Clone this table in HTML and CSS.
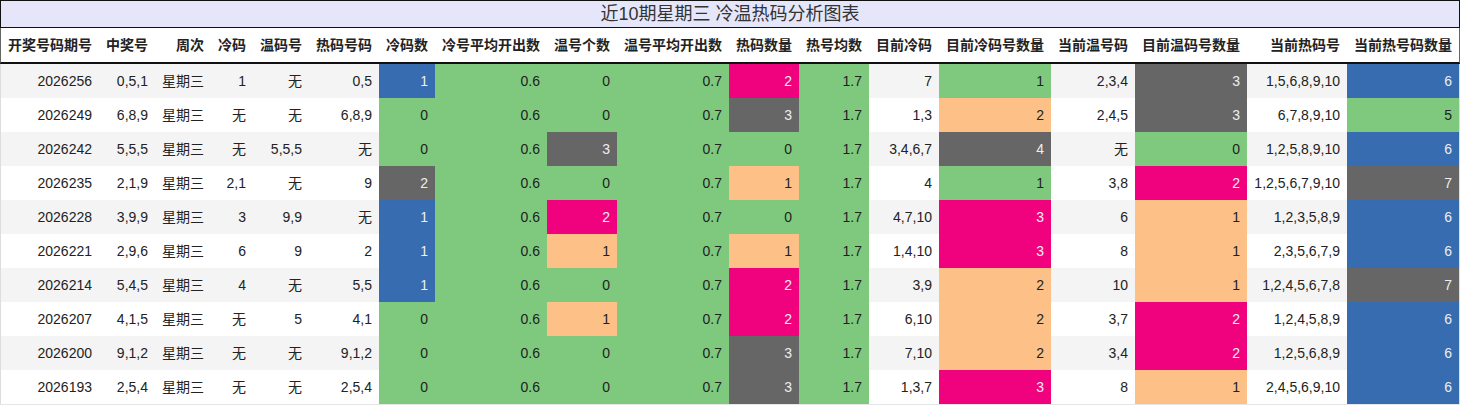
FILE: index.html
```html
<!DOCTYPE html>
<html lang="zh-CN">
<head>
<meta charset="utf-8">
<title>近10期星期三 冷温热码分析图表</title>
<link rel="stylesheet" href="styles.css">
</head>
<body>
<div class="chart">
  <div class="title">近10期星期三 冷温热码分析图表</div>
  <div class="table">
    <div class="row head">
      <div class="c">开奖号码期号</div><div class="c">中奖号</div><div class="c">周次</div><div class="c">冷码</div><div class="c">温码号</div><div class="c">热码号码</div><div class="c">冷码数</div><div class="c">冷号平均开出数</div><div class="c">温号个数</div><div class="c">温号平均开出数</div><div class="c">热码数量</div><div class="c">热号均数</div><div class="c">目前冷码</div><div class="c">目前冷码号数量</div><div class="c">当前温号码</div><div class="c">目前温码号数量</div><div class="c">当前热码号</div><div class="c">当前热号码数量</div>
    </div>
    <div class="row">
      <div class="c">2026256</div><div class="c">0,5,1</div><div class="c">星期三</div><div class="c">1</div><div class="c">无</div><div class="c">0,5</div><div class="c blue">1</div><div class="c green">0.6</div><div class="c green">0</div><div class="c green">0.7</div><div class="c pink">2</div><div class="c green">1.7</div><div class="c">7</div><div class="c green">1</div><div class="c">2,3,4</div><div class="c grey">3</div><div class="c">1,5,6,8,9,10</div><div class="c blue">6</div>
    </div>
    <div class="row">
      <div class="c">2026249</div><div class="c">6,8,9</div><div class="c">星期三</div><div class="c">无</div><div class="c">无</div><div class="c">6,8,9</div><div class="c green">0</div><div class="c green">0.6</div><div class="c green">0</div><div class="c green">0.7</div><div class="c grey">3</div><div class="c green">1.7</div><div class="c">1,3</div><div class="c orange">2</div><div class="c">2,4,5</div><div class="c grey">3</div><div class="c">6,7,8,9,10</div><div class="c green">5</div>
    </div>
    <div class="row">
      <div class="c">2026242</div><div class="c">5,5,5</div><div class="c">星期三</div><div class="c">无</div><div class="c">5,5,5</div><div class="c">无</div><div class="c green">0</div><div class="c green">0.6</div><div class="c grey">3</div><div class="c green">0.7</div><div class="c green">0</div><div class="c green">1.7</div><div class="c">3,4,6,7</div><div class="c grey">4</div><div class="c">无</div><div class="c green">0</div><div class="c">1,2,5,8,9,10</div><div class="c blue">6</div>
    </div>
    <div class="row">
      <div class="c">2026235</div><div class="c">2,1,9</div><div class="c">星期三</div><div class="c">2,1</div><div class="c">无</div><div class="c">9</div><div class="c grey">2</div><div class="c green">0.6</div><div class="c green">0</div><div class="c green">0.7</div><div class="c orange">1</div><div class="c green">1.7</div><div class="c">4</div><div class="c green">1</div><div class="c">3,8</div><div class="c pink">2</div><div class="c">1,2,5,6,7,9,10</div><div class="c grey">7</div>
    </div>
    <div class="row">
      <div class="c">2026228</div><div class="c">3,9,9</div><div class="c">星期三</div><div class="c">3</div><div class="c">9,9</div><div class="c">无</div><div class="c blue">1</div><div class="c green">0.6</div><div class="c pink">2</div><div class="c green">0.7</div><div class="c green">0</div><div class="c green">1.7</div><div class="c">4,7,10</div><div class="c pink">3</div><div class="c">6</div><div class="c orange">1</div><div class="c">1,2,3,5,8,9</div><div class="c blue">6</div>
    </div>
    <div class="row">
      <div class="c">2026221</div><div class="c">2,9,6</div><div class="c">星期三</div><div class="c">6</div><div class="c">9</div><div class="c">2</div><div class="c blue">1</div><div class="c green">0.6</div><div class="c orange">1</div><div class="c green">0.7</div><div class="c orange">1</div><div class="c green">1.7</div><div class="c">1,4,10</div><div class="c pink">3</div><div class="c">8</div><div class="c orange">1</div><div class="c">2,3,5,6,7,9</div><div class="c blue">6</div>
    </div>
    <div class="row">
      <div class="c">2026214</div><div class="c">5,4,5</div><div class="c">星期三</div><div class="c">4</div><div class="c">无</div><div class="c">5,5</div><div class="c blue">1</div><div class="c green">0.6</div><div class="c green">0</div><div class="c green">0.7</div><div class="c pink">2</div><div class="c green">1.7</div><div class="c">3,9</div><div class="c orange">2</div><div class="c">10</div><div class="c orange">1</div><div class="c">1,2,4,5,6,7,8</div><div class="c grey">7</div>
    </div>
    <div class="row">
      <div class="c">2026207</div><div class="c">4,1,5</div><div class="c">星期三</div><div class="c">无</div><div class="c">5</div><div class="c">4,1</div><div class="c green">0</div><div class="c green">0.6</div><div class="c orange">1</div><div class="c green">0.7</div><div class="c pink">2</div><div class="c green">1.7</div><div class="c">6,10</div><div class="c orange">2</div><div class="c">3,7</div><div class="c pink">2</div><div class="c">1,2,4,5,8,9</div><div class="c blue">6</div>
    </div>
    <div class="row">
      <div class="c">2026200</div><div class="c">9,1,2</div><div class="c">星期三</div><div class="c">无</div><div class="c">无</div><div class="c">9,1,2</div><div class="c green">0</div><div class="c green">0.6</div><div class="c green">0</div><div class="c green">0.7</div><div class="c grey">3</div><div class="c green">1.7</div><div class="c">7,10</div><div class="c orange">2</div><div class="c">3,4</div><div class="c pink">2</div><div class="c">1,2,5,6,8,9</div><div class="c blue">6</div>
    </div>
    <div class="row">
      <div class="c">2026193</div><div class="c">2,5,4</div><div class="c">星期三</div><div class="c">无</div><div class="c">无</div><div class="c">2,5,4</div><div class="c green">0</div><div class="c green">0.6</div><div class="c green">0</div><div class="c green">0.7</div><div class="c grey">3</div><div class="c green">1.7</div><div class="c">1,3,7</div><div class="c pink">3</div><div class="c">8</div><div class="c orange">1</div><div class="c">2,4,5,6,9,10</div><div class="c blue">6</div>
    </div>
  </div>
</div>
</body>
</html>
```

FILE: styles.css
```css
* { box-sizing: border-box; }

html, body {
  margin: 0;
  padding: 0;
  background: #ffffff;
}

body {
  font-family: "Liberation Sans", "Noto Sans CJK SC", sans-serif;
  font-size: 14px;
  color: #222222;
}

.chart {
  width: 1460px;
}

.title {
  height: 28px;
  border: 1px solid #111111;
  background: #e6e6fa;
  color: #333333;
  font-size: 18px;
  line-height: 26px;
  text-align: center;
}

.row {
  display: grid;
  grid-template-columns: 98px 56px 56px 42px 56px 70px 56px 112px 70px 112px 70px 70px 70px 112px 84px 112px 100px 112px;
  border-left: 1px solid #dddddd;
  border-right: 1px solid #dddddd;
  height: 34px;
}

.row:nth-child(even) { background: #f4f4f4; }
.row:nth-child(odd) { background: #ffffff; }

.row:last-child {
  height: 35px;
  border-bottom: 1px solid #e6e6e6;
}

.row.head {
  height: 36px;
  background: #ffffff;
  border-left-color: #666666;
  border-right-color: #666666;
  border-bottom: 2px solid #111111;
  font-weight: bold;
}

.c {
  padding: 0 7px;
  line-height: 34px;
  text-align: right;
  white-space: nowrap;
  overflow: hidden;
}

.green { background: #7fc97f; color: #222222; }
.orange { background: #fdc086; color: #222222; }
.blue { background: #386cb0; color: #eeeeee; }
.pink { background: #f0027f; color: #eeeeee; }
.grey { background: #666666; color: #eeeeee; }
```
